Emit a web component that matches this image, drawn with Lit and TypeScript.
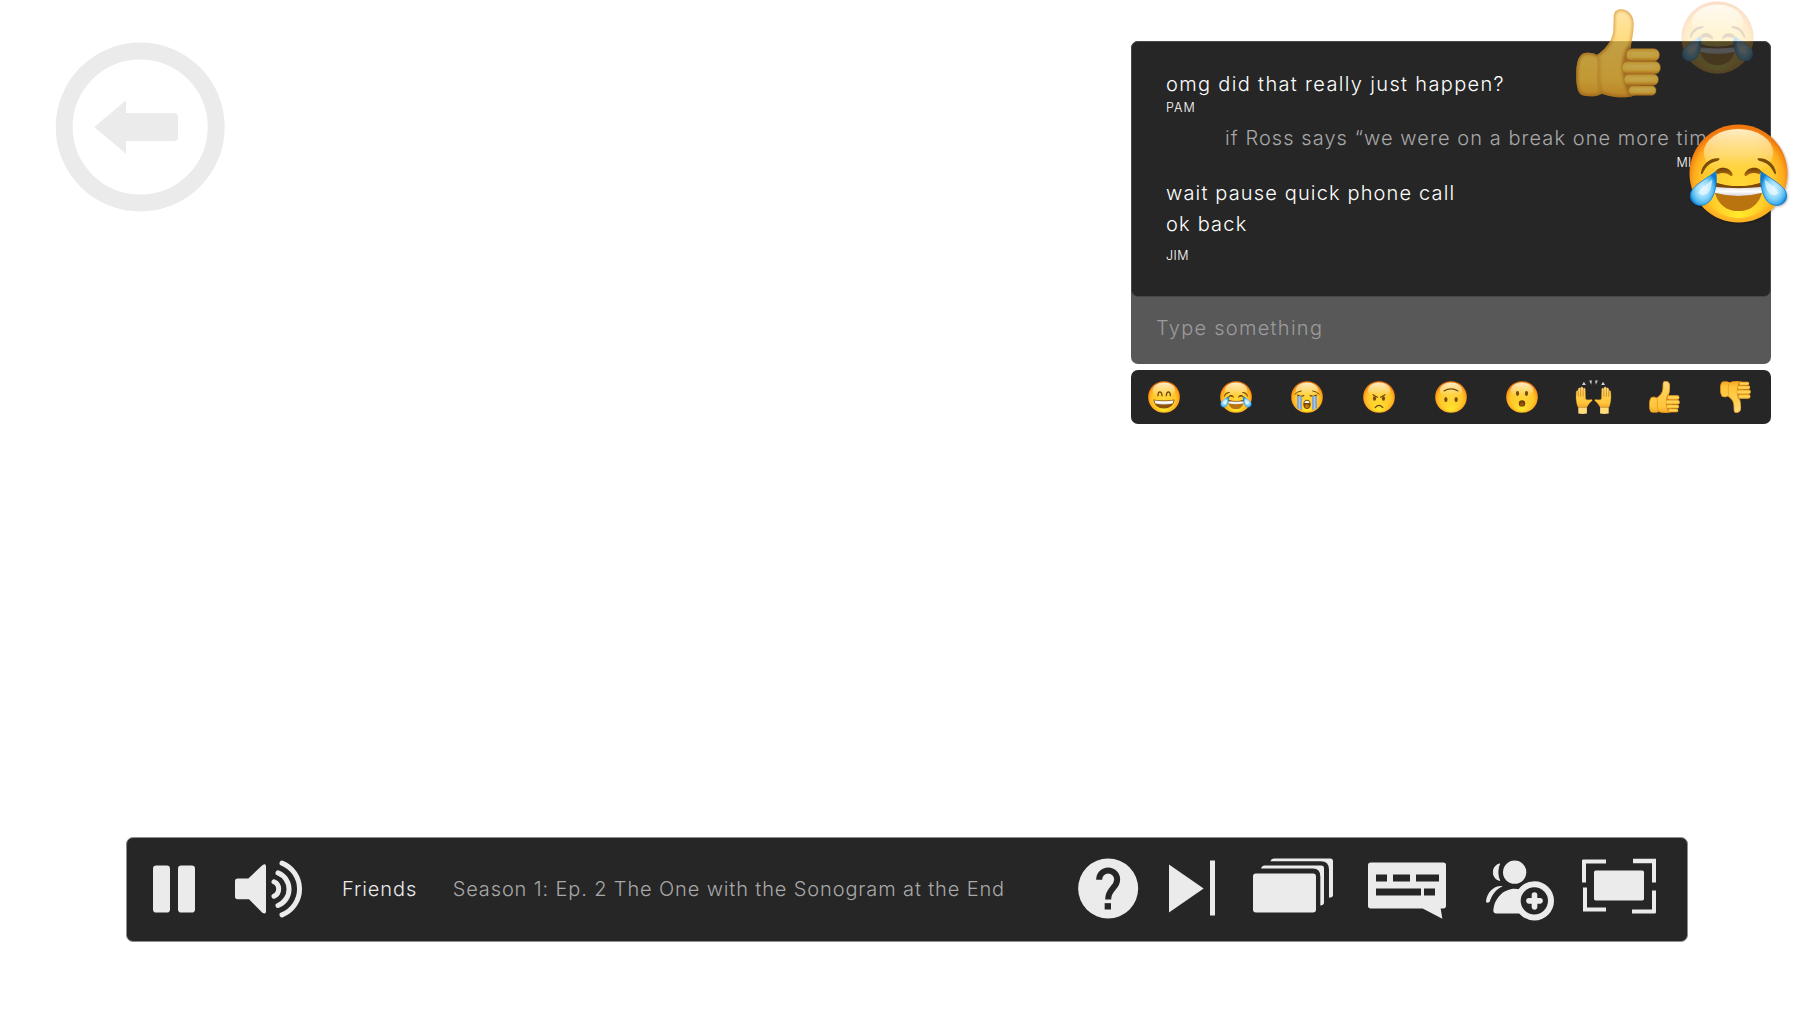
import { LitElement, html, svg, css, nothing, type SVGTemplateResult } from "lit";
import { customElement } from "lit/decorators.js";
import { styleMap } from "lit/directives/style-map.js";

/* ---------- emoji artwork, drawn on a 100 x 100 face ---------- */

const defs = svg`
  <defs>
    <radialGradient id="skin" cx="50%" cy="56%" r="53%">
      <stop offset="0" stop-color="#ffd736" />
      <stop offset="0.66" stop-color="#ffc92c" />
      <stop offset="0.86" stop-color="#ffac1c" />
      <stop offset="1" stop-color="#f0780f" />
    </radialGradient>
    <linearGradient id="shine" x1="0" y1="0" x2="0" y2="1">
      <stop offset="0" stop-color="#fff3cf" stop-opacity="0.95" />
      <stop offset="0.55" stop-color="#ffe49a" stop-opacity="0.6" />
      <stop offset="1" stop-color="#ffd34d" stop-opacity="0" />
    </linearGradient>
    <radialGradient id="chin" cx="50%" cy="100%" r="42%">
      <stop offset="0" stop-color="#fff02a" stop-opacity="0.95" />
      <stop offset="1" stop-color="#ffe02a" stop-opacity="0" />
    </radialGradient>
    <linearGradient id="brown" x1="0" y1="0" x2="0" y2="1">
      <stop offset="0" stop-color="#6b3f06" />
      <stop offset="1" stop-color="#b87410" />
    </linearGradient>
    <linearGradient id="teeth" x1="0" y1="0" x2="0" y2="1">
      <stop offset="0" stop-color="#dcdce2" />
      <stop offset="0.5" stop-color="#ffffff" />
      <stop offset="1" stop-color="#d5d5dc" />
    </linearGradient>
    <radialGradient id="tear" cx="48%" cy="52%" r="55%">
      <stop offset="0" stop-color="#d8f4ff" />
      <stop offset="0.5" stop-color="#8ed7fa" />
      <stop offset="0.8" stop-color="#43b2ee" />
      <stop offset="1" stop-color="#0f78cf" />
    </radialGradient>
    <linearGradient id="palm" x1="0" y1="0" x2="0" y2="1">
      <stop offset="0" stop-color="#ffdc84" />
      <stop offset="0.35" stop-color="#ffd052" />
      <stop offset="0.8" stop-color="#ffc53a" />
      <stop offset="1" stop-color="#f3a827" />
    </linearGradient>
    <linearGradient id="finger" x1="0" y1="0" x2="0" y2="1">
      <stop offset="0" stop-color="#f6b733" />
      <stop offset="0.35" stop-color="#ffcf4c" />
      <stop offset="0.7" stop-color="#ffc53a" />
      <stop offset="1" stop-color="#dd8a18" />
    </linearGradient>
    <filter id="soft" x="-20%" y="-20%" width="140%" height="140%"><feGaussianBlur stdDeviation="4" /></filter>
    <clipPath id="thumb-clip"><path d="M62 138 C84 126 110 96 112 64 L113 24 C113 6 124 0 138 1 C160 3 175 22 173 50 C172 78 166 100 162 124 L190 130 V240
    C188 258 166 266 136 265 C112 264 90 258 77 254 C66 262 40 264 20 259 C4 254 0 226 1 194 C1 160 8 136 26 132 C40 130 52 131 62 138Z" /></clipPath>
  </defs>`;

const ball = svg`
  <circle cx="50" cy="50" r="49.5" fill="url(#skin)" />
  <ellipse cx="50" cy="50" rx="42" ry="45" fill="url(#chin)" />
  <ellipse cx="50" cy="29" rx="35" ry="24" fill="url(#shine)" />`;

const stroke = (d: string, w: number) =>
  svg`<path d=${d} fill="none" stroke="#70430a" stroke-width=${w} stroke-linecap="round" stroke-linejoin="round" />`;

const eye = (cx: number, cy: number, rx = 5, ry = 8) =>
  svg`<ellipse cx=${cx} cy=${cy} rx=${rx} ry=${ry} fill="#7a4a0a" />`;

const joyHalf = svg`
  <path d="M12 50 C13 40 22 33.5 30.5 34.6 C31.5 35.5 30 37 28.5 37.3 C21 39 17 43 14 49.5 C13.3 50.8 12 50.9 12 50Z" fill="#7a4d08" />
  <path d="M26.5 49 C28 42.5 41 42 44 50.6 C44.3 52.3 43 53.2 41.8 52.3 C37 48.6 33 49.2 29 50.8Z" fill="url(#brown)" />
  <path d="M27 48 C28.5 57 27.5 67 23 75 C19.5 81.5 12 84 6.5 81 C0.5 78 0 70.5 4 65.5 C9 59.5 18.5 54.5 27 48Z" fill="url(#tear)" stroke="#1479cd" stroke-width="0.8" />
  <path d="M23.5 56 C23 62 22 66 19 70 C15 73 11 72 9.5 69.5 C12 64 18 61 23.5 56Z" fill="#effbff" opacity="0.65" />`;

const faces = {
  grin: svg`${ball}
    ${stroke("M31 46 C32 30 42 30 44 46", 4)}
    ${stroke("M57 46 C59 30 69 30 70 46", 4)}
    <path d="M17 58 Q50 64 83 58 C81 77 67 86 50 86 C33 86 19 77 17 58Z" fill="#8b5208" />
    <path d="M20 60.5 Q50 66 80 60.5 L77 70 Q50 77 23 70Z" fill="url(#teeth)" />`,
  joy: svg`${ball}
    <path d="M25 59 Q50 67 75 59 C75 77 65 88 50 88 C35 88 25 77 25 59Z" fill="#b97410" />
    <path d="M25 58.5 Q50 67 75 58.5 L75 65 H25Z" fill="#7d4708" />
    <path d="M25 63.5 Q50 66.5 75 63.5 L74 69.5 Q50 76 26 69.5Z" fill="url(#teeth)" />
    ${joyHalf}
    <g transform="matrix(-1 0 0 1 100 0)">${joyHalf}</g>`,
  sob: svg`${ball}
    ${stroke("M12 41 Q20 33 32 31", 3)}
    ${stroke("M68 31 Q80 33 88 41", 3)}
    ${stroke("M20 44 Q30 51 40 45", 3.5)}
    ${stroke("M60 45 Q70 51 80 44", 3.5)}
    <path d="M19 46 Q27 49 34 47 V91 Q26 88 19 84Z" fill="#7da0cf" />
    <path d="M81 46 Q73 49 66 47 V91 Q74 88 81 84Z" fill="#7da0cf" />
    <rect x="24" y="48" width="5" height="40" fill="#a9c4e6" />
    <rect x="71" y="48" width="5" height="40" fill="#a9c4e6" />
    <ellipse cx="50" cy="73" rx="11.5" ry="14.5" fill="#7b4508" />
    <path d="M42 66 Q50 58 58 66 L57 69 H43Z" fill="#f5f5f5" />
    <ellipse cx="50" cy="79" rx="6" ry="6" fill="#bf7913" />`,
  angry: svg`${ball}
    ${stroke("M31 43 L45 51", 3.6)}
    ${stroke("M69 43 L55 51", 3.6)}
    ${eye(36, 55, 5, 7)}${eye(64, 55, 5, 7)}
    ${stroke("M38 83 Q50 69 62 83", 4)}`,
  flipped: svg`${ball}
    ${stroke("M28 31 Q50 18 72 31", 3.4)}
    ${eye(34, 58)}${eye(66, 58)}`,
  gasp: svg`${ball}
    ${eye(36, 39, 5, 7.5)}${eye(64, 39, 5, 7.5)}
    <circle cx="50" cy="70" r="10" fill="#6b3c06" />
    <circle cx="50" cy="72.5" r="6" fill="#9a570c" />`,
};

const outline = "M62 138 C84 126 110 96 112 64 L113 24 C113 6 124 0 138 1 C160 3 175 22 173 50 C172 78 166 100 162 124 L190 130 V240 C188 258 166 266 136 265 C112 264 90 258 77 254 C66 262 40 264 20 259 C4 254 0 226 1 194 C1 160 8 136 26 132 C40 130 52 131 62 138Z";
const pill = (x: number, y: number, w: number, h: number) => svg`
  <rect x=${x} y=${y} width=${w} height=${h} rx=${h * 0.46} fill="url(#finger)" stroke="#c98020" stroke-width="1.6" />
  <rect x=${x + 10} y=${y + h * 0.28} width=${w - 24} height=${h * 0.34} rx=${h * 0.17} fill="#ffd860" opacity="0.8" filter="url(#soft)" />`;
const thumb = svg`
  <path d=${outline} fill="url(#palm)" />
  <g clip-path="url(#thumb-clip)">
    <path d=${outline} fill="none" stroke="#cf7f12" stroke-width="9" filter="url(#soft)" />
    <path d="M66 140 C74 168 58 220 80 258" fill="none" stroke="#d98a1c" stroke-width="8" opacity="0.6" filter="url(#soft)" />
    <path d="M154 112 C132 150 134 200 158 262 H196 V112Z" fill="#bf7014" opacity="0.75" filter="url(#soft)" />
  </g>
  ${pill(158, 230, 82, 29)}
  ${pill(144, 195, 103, 34)}
  ${pill(138, 157, 115, 38)}
  ${pill(151, 119, 99, 38)}`;

const hand = svg`
  <path d="M7 82 H33 V101 Q20 104 7 101Z" fill="#ffdc7c" />
  <path d="M6 82 C3 74 0 64 0 50 L1 34 Q3 29 6 33 L7 26 Q10 20 13 25 L14 23 Q18 17 21 23 L22 26 Q26 21 28 27 L29 57
    Q35 61 42 59 Q50 57 49 62 Q42 67 38 74 Q34 80 33 82Z" fill="url(#palm)" stroke="#d98a1c" stroke-width="1" />
  <path d="M7 33 V50 M14 26 V50 M21.500 27 V50" stroke="#b97212" stroke-width="2" fill="none" />`;
const spark = svg`<path d="M24 5 L30 15 H18Z M40 1 H48 L46 14Z" fill="#cfcfd2" />`;
const hands = svg`
  ${hand}${spark}
  <g transform="matrix(-1 0 0 1 106 0)">${hand}${spark}</g>`;

/* ---------- control glyphs ---------- */

interface Glyph { name: string; x: number; w: number; art: SVGTemplateResult }

const pauseGlyph: Glyph = { name: "pause", x: 99, w: 126, art: svg`
  <rect x="99" y="108" width="51" height="141" rx="10" /><rect x="174" y="108" width="51" height="141" rx="10" />` };

const volumeGlyph: Glyph = { name: "volume", x: 345, w: 204, art: svg`
  <path d="M345 155 Q345 147 353 147 H385 L427 107 Q438 100 438 111 V246 Q438 256 427 250 L387 209 H353 Q345 209 345 201Z" />
  <g fill="none" stroke="#ebebeb" stroke-width="15" stroke-linecap="round">
    <path d="M462 157 A23.500 23.500 0 0 1 462 200" />
    <path d="M474 130 A52.800 52.800 0 0 1 474 228" />
    <path d="M486 101 A83.400 83.400 0 0 1 486 256" />
  </g>` };

const glyphs: Glyph[] = [
  { name: "help", x: 54, w: 181, art: svg`
    <circle cx="144.500" cy="177" r="90" />
    <path d="M117.500 151 V150 A27 27 0 0 1 171.500 150 C171.500 176 144.500 176 144.500 210" fill="none" stroke="#262626" stroke-width="18" />
    <rect x="134" y="221" width="19" height="19" fill="#262626" />` },
  { name: "next", x: 327, w: 139, art: svg`
    <path d="M327 105 L431 177 L327 249Z" /><rect x="450" y="93" width="15" height="165" />` },
  { name: "episodes", x: 579, w: 241, art: svg`
    <rect x="579" y="132" width="189" height="117" rx="9" />
    <path d="M603 117 Q606 108 614 108 H784 Q792 108 792 116 V220 Q791 228 781 228 V141 Q781 117 759 117Z" />
    <path d="M631 95 Q634 87 641 87 H811 Q819 87 819 95 V197 Q819 204 807 204 V120 Q807 95 782 95Z" />` },
  { name: "chat", x: 24, w: 234, art: svg`
    <path d="M32 99 H250 Q258 99 258 107 V229 Q258 237 250 237 H242 L247 268 L188 237 H32 Q24 237 24 229 V107 Q24 99 32 99Z" />
    <path d="M48 135h33v21h-33z M99 135h51v21h-51z M168 135h69v21h-69z M48 177h135v21h-135z M192 177h33v21h-33z" fill="#262626" />` },
  { name: "invite", x: 378, w: 204, art: svg`
    <circle cx="464" cy="128" r="35" />
    <path d="M419 103 A26 26 0 0 0 419 153 C412 138 412 118 419 103Z" stroke="#ebebeb" stroke-width="3" stroke-linejoin="round" />
    <path d="M400 243 C402 206 432 178 464 178 Q480 178 492 184 L500 252 H409 Q400 252 400 243Z" />
    <path d="M378 215 C382 186 404 167 428 170 C408 179 396 195 389 217 Q380 224 378 215Z" />
    <circle cx="523" cy="214" r="50" fill="#262626" stroke="#ebebeb" stroke-width="18" />
    <path d="M507 214 H540 M523.500 197 V232" fill="none" stroke="#ebebeb" stroke-width="17" stroke-linecap="round" />` },
  { name: "fullscreen", x: 666, w: 222, art: svg`
    <rect x="702" y="123" width="150" height="90" rx="5" />
    <path d="M666 94 Q666 90 670 90 H738 V102 H678 V159 H666Z" />
    <path d="M819 88 H888 V159 H876 V101 H819Z" />
    <path d="M669 174 H681 V234 H738 V246 H669Z" />
    <path d="M876 183 H888 V248 Q888 252 884 252 H816 V240 H876Z" />` },
];

const glyph = (g: Glyph) => html`
  <button class="control ${g.name}" aria-label=${g.name}>
    <svg width=${g.w / 3} height="64" viewBox="${g.x} 82.500 ${g.w} 192" fill="#ebebeb">${g.art}</svg>
  </button>`;

/* ---------- chat data ---------- */

interface Message { author: string; lines: { text: string; tracking: number }[]; kind: string }

const messages: Message[] = [
  { author: "PAM", kind: "pam", lines: [{ text: "omg did that really just happen?", tracking: 1.34 }] },
  { author: "MICHAEL", kind: "own", lines: [{ text: "if Ross says “we were on a break one more time", tracking: 1.07 }] },
  { author: "JIM", kind: "jim", lines: [
    { text: "wait pause quick phone call", tracking: 1.15 },
    { text: "ok back", tracking: 1.2 },
  ] },
];

const face = (art: SVGTemplateResult) => html`<svg class="emoji" viewBox="0 0 100 100" width="32" height="32">${art}</svg>`;

@customElement("app-root")
export class AppRoot extends LitElement {
  static styles = css`
    :host {
      position: relative;
      display: flex;
      flex-direction: column;
      justify-content: space-between;
      box-sizing: border-box;
      width: 1820px;
      height: 1024px;
      padding: 41px 49px 82px 55px;
      overflow: hidden;
      background: #fff;
      font-family: Inter, "Open Sans", sans-serif;
      font-size: 20px;
      font-weight: 300;
    }
    svg { display: block; overflow: visible; }
    button { display: block; margin: 0; padding: 0; border: 0; background: none; }
    .top { display: flex; justify-content: space-between; align-items: flex-start; }
    .side { display: flex; flex-direction: column; gap: 6px; width: 640px; }
    .panel { border-radius: 7px; background: #585858; height: 323px; }
    .log {
      box-sizing: border-box;
      height: 256px;
      padding: 30px 38px 0 34px;
      border: 1px solid #484848;
      border-radius: 7px;
      background: #262626;
      color: #fff;
      white-space: nowrap;
    }
    .line { line-height: 24px; }
    .author { font-size: 12.5px; line-height: 16px; letter-spacing: 1.1px; }
    .pam .author { margin-top: 4px; }
    .own { width: 510px; margin: 10px 0 0 59px; }
    .own .line { color: #a8a8a8; }
    .own .author { margin-top: 5px; text-align: right; letter-spacing: 0.4px; }
    .jim { margin-top: 10px; }
    .jim .line + .line { margin-top: 7px; }
    .jim .author { margin-top: 12px; letter-spacing: 0.4px; }
    .compose {
      padding: 19px 25px;
      color: #9c9c9c;
      line-height: 24px;
      letter-spacing: 1.28px;
    }
    .reactions {
      display: flex;
      align-items: center;
      justify-content: space-between;
      box-sizing: border-box;
      height: 54px;
      padding: 0 20px 0 17px;
      border-radius: 7px;
      background: #262626;
    }
    .reactions .hands { margin: 0 -1.500px; }
    .bar {
      display: flex;
      align-items: center;
      box-sizing: border-box;
      width: 1562px;
      height: 105px;
      margin-left: 71px;
      padding: 0 31px 1px 26px;
      border: 1px solid #8e8e8e;
      border-radius: 7px;
      background: #262626;
      white-space: nowrap;
    }
    .volume { margin-left: 40px; }
    .show, .episode { padding-bottom: 1px; }
    .show { margin-left: 39px; color: #ebebeb; letter-spacing: 0.9px; }
    .episode { margin-left: 35.500px; color: #a8a8a8; letter-spacing: 0.87px; }
    .help { margin-left: auto; }
    .next { margin-left: 30.500px; }
    .episodes { margin-left: 37.700px; }
    .chat { margin-left: 34.700px; }
    .invite { margin-left: 40px; }
    .fullscreen { margin-left: 28px; }
    .floating { position: absolute; }
    .f-thumb { left: 1576px; top: 8.500px; opacity: 0.72; }
    .f-faded { left: 1681px; top: 1px; opacity: 0.22; }
    .f-joy { left: 1689px; top: 124px; filter: drop-shadow(1px 1px 1px rgba(0, 0, 0, 0.25)); }
  `;

  private message(m: Message) {
    return html`
      <div class=${m.kind}>
        ${m.lines.map((l) => html`<div class="line" style=${styleMap({ letterSpacing: `${l.tracking}px` })}>${l.text}</div>`)}
        ${m.author ? html`<div class="author">${m.author}</div>` : nothing}
      </div>`;
  }

  render() {
    return html`
      <div class="top">
        <button aria-label="Back">
          <svg width="170" height="172" viewBox="0 0 170 172" fill="#ebebeb">
            <circle cx="85.200" cy="86" r="76" fill="none" stroke="#ebebeb" stroke-width="17" />
            <path d="M39.300 86 L71 59.300 V72 H119 Q123 72 123 76 V96 Q123 100 119 100 H71 V112.700Z" />
          </svg>
        </button>
        <div class="side">
          <div class="panel">
            <div class="log">${messages.map((m) => this.message(m))}</div>
            <div class="compose">Type something</div>
          </div>
          <div class="reactions">
            ${face(svg`${defs}${faces.grin}`)}
            ${face(faces.joy)}${face(faces.sob)}${face(faces.angry)}${face(faces.flipped)}${face(faces.gasp)}
            <svg class="hands" viewBox="0 0 106 102" width="35" height="34">${hands}</svg>
            <svg viewBox="0 0 254 265" width="31" height="32">${thumb}</svg>
            <svg viewBox="0 0 254 265" width="31" height="32"><g transform="matrix(1 0 0 -1 0 265)">${thumb}</g></svg>
          </div>
        </div>
      </div>

      <div class="bar">
        ${glyph(pauseGlyph)}${glyph(volumeGlyph)}
        <span class="show">Friends</span>
        <span class="episode">Season 1: Ep. 2 The One with the Sonogram at the End</span>
        ${glyphs.map(glyph)}
      </div>

      <svg class="floating f-thumb" viewBox="0 0 254 265" width="84.700" height="88.300">${thumb}</svg>
      <svg class="floating f-faded" viewBox="0 0 100 100" width="73" height="73">${faces.joy}</svg>
      <svg class="floating f-joy" viewBox="0 0 100 100" width="99" height="99">${faces.joy}</svg>
    `;
  }
}
